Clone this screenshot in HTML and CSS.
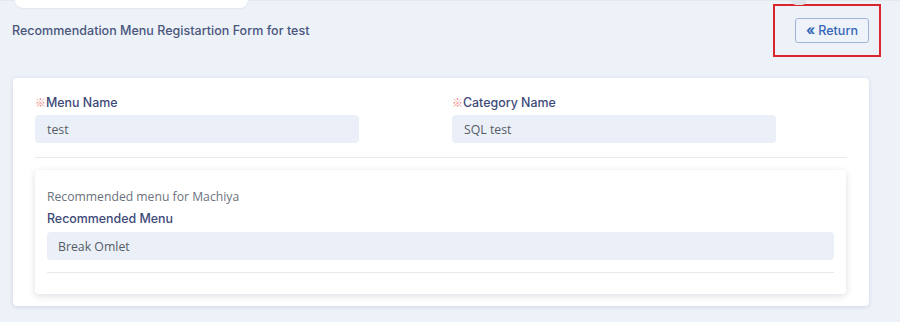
FILE: index.html
```html
<!DOCTYPE html>
<html>
<head>
<meta charset="utf-8">
<link rel="stylesheet" href="styles.css">
</head>
<body>
<div class="strip">
  <div class="strip-card"></div>
  <div class="strip-dot"></div>
</div>
<div class="header">
  <h1 class="title">Recommendation Menu Registartion Form for test</h1>
  <div class="highlight">
    <button class="btn-return"><span class="chev">&laquo;</span> Return</button>
  </div>
</div>
<div class="card">
  <div class="row">
    <div class="field">
      <label class="label"><span class="req">※</span>Menu Name</label>
      <div class="input">test</div>
    </div>
    <div class="field">
      <label class="label"><span class="req">※</span>Category Name</label>
      <div class="input">SQL test</div>
    </div>
  </div>
  <hr class="divider">
  <div class="inner">
    <p class="note">Recommended menu for Machiya</p>
    <label class="label">Recommended Menu</label>
    <div class="input wide">Break Omlet</div>
    <hr class="divider inner-div">
  </div>
</div>
</body>
</html>
```
FILE: styles.css
```css
* { box-sizing: border-box; }
html, body { margin: 0; padding: 0; }
body {
  background: #edf1f8;
  width: 900px;
  height: 322px;
  overflow: hidden;
  font-family: "Open Sans", "Noto Sans", sans-serif;
}
.strip {
  height: 4px;
  display: flex;
  align-items: flex-end;
  border-top: 1px solid #e4e8ef;
  position: relative;
}
.strip-card {
  margin-left: 15px;
  width: 233px;
  height: 10px;
  margin-bottom: -4px;
  background: #fff;
  border-radius: 0 0 8px 8px;
  box-shadow: 0 1px 2px rgba(0,0,0,0.05);
}
.strip-dot {
  margin-left: auto;
  margin-right: 93px;
  width: 16px;
  height: 5px;
  background: #dfe3ea;
  border-radius: 0 0 8px 8px;
  margin-bottom: -1px;
}
.header {
  height: 74px;
  display: flex;
  justify-content: space-between;
  align-items: flex-start;
  padding: 0 19px 0 12px;
}
.title {
  margin: 19px 0 0 0;
  font-family: "Inter", "Lato", sans-serif;
  font-size: 12.5px;
  font-weight: 500;
  line-height: 16px;
  color: #4a567c;
  letter-spacing: 0.02px;
}
.highlight {
  border: 2px solid #d9262c;
  width: 108px;
  height: 53px;
  padding: 12px 10px 0 20px;
}
.btn-return {
  width: 74px;
  height: 25px;
  background: #eef2f9;
  border: 1px solid #9fb4d6;
  border-radius: 3px;
  color: #3567b8;
  font-family: "Inter", "Lato", sans-serif;
  font-size: 12.5px;
  font-weight: 500;
  padding: 0;
  display: flex;
  align-items: center;
  justify-content: center;
  gap: 3px;
}
.chev {
  font-size: 14px;
  font-weight: 700;
  line-height: 1;
  margin-top: -2px;
}
.card {
  margin: 0 31px 0 13px;
  background: #fff;
  border-radius: 4px;
  box-shadow: 0 1px 4px rgba(40,50,80,0.14);
  padding: 16px 22px 12px 22px;
}
.row {
  display: grid;
  grid-template-columns: 417px 1fr;
}
.field { display: flex; flex-direction: column; }
.label {
  display: block;
  font-family: "Inter", "Lato", sans-serif;
  font-size: 12.4px;
  font-weight: 500;
  line-height: 16px;
  color: #3d4978;
  height: 16px;
}
.req {
  color: #f08a8a;
  font-family: "Noto Sans CJK JP", sans-serif;
  font-size: 11px;
  font-weight: 400;
}
.input {
  margin-top: 5px;
  width: 324px;
  height: 28px;
  background: #ebf0f8;
  border-radius: 4px;
  padding: 0 12px;
  display: flex;
  align-items: center;
  font-size: 12.3px;
  color: #555c66;
}
.input.wide { width: 100%; margin-top: 5px; padding-left: 11px; }
.divider {
  border: 0;
  border-top: 1px solid #e6e9ee;
  margin: 14px 0 0 0;
  height: 0;
}
.inner {
  margin-top: 12px;
  margin-right: 1px;
  border-radius: 4px;
  box-shadow: 0 2px 7px rgba(40,50,80,0.16);
  padding: 19px 12px 21px 12px;
}
.note {
  margin: 0 0 6px 0;
  font-size: 12.2px;
  line-height: 16px;
  color: #6c727c;
}
.inner-div { margin-top: 12px; }
```
